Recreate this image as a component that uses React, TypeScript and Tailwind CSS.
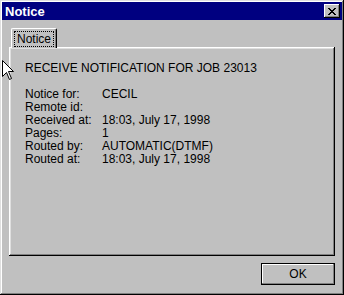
import React from 'react';

const rows: [string, string][] = [
  ['Notice for:', 'CECIL'],
  ['Remote id:', ''],
  ['Received at:', '18:03, July 17, 1998'],
  ['Pages:', '1'],
  ['Routed by:', 'AUTOMATIC(DTMF)'],
  ['Routed at:', '18:03, July 17, 1998'],
];

const Cursor = () => (
  <svg className="absolute left-[2px] top-[60px]" width="12" height="20" viewBox="0 0 12 20">
    <path d="M0.5 0.5 L0.5 16.5 L4.5 12.5 L7.5 19.5 L9.5 18.5 L6.5 11.5 L11.5 11.5 Z" fill="#fff" stroke="#000" strokeWidth="1" />
  </svg>
);

const App = () => {
  return (
    <div className="relative w-[344px] h-[295px] bg-[#c0c0c0] p-[2px] shadow-[inset_-1px_-1px_#000,inset_1px_1px_#dfdfdf,inset_-2px_-2px_#808080,inset_2px_2px_#fff]">
      {/* title bar */}
      <div className="h-[18px] bg-[#000080] flex items-center justify-between pl-[3px] pr-[2px]">
        <span className="text-white font-bold text-[13px] leading-none font-['Liberation_Sans',sans-serif]">Notice</span>
        <div className="w-[16px] h-[14px] bg-[#c0c0c0] flex items-center justify-center shadow-[inset_-1px_-1px_#000,inset_1px_1px_#fff,inset_-2px_-2px_#808080]">
          <svg width="8" height="7" viewBox="0 0 8 7">
            <path d="M0 0h2v1h1v1h2v-1h1v-1h2v1h-1v1h-1v1h-1v1h1v1h1v1h1v1h-2v-1h-1v-1h-2v1h-1v1h-2v-1h1v-1h1v-1h1v-1h-1v-1h-1v-1h-1z" fill="#000" />
          </svg>
        </div>
      </div>

      {/* tab control */}
      <div className="pl-[7px] pt-[8px] pr-[7px] text-[12px] font-['Liberation_Sans',sans-serif] text-black">
        <div className="flex">
          <div className="ml-[2px] w-[46px] h-[20px] bg-[#c0c0c0] rounded-t-[2px] border-t border-l border-white border-r border-r-[#000] shadow-[inset_-1px_0_#808080] relative z-10 -mb-[1px] flex items-center justify-center">
            <span className="border border-dotted border-black px-[2px] leading-[14px]">Notice</span>
          </div>
        </div>
        <div className="h-[209px] shadow-[inset_-1px_-1px_#000,inset_1px_1px_#fff,inset_-2px_-2px_#808080,inset_2px_2px_#dfdfdf] pl-[16px] pt-[14px]">
          <div className="leading-[14px] whitespace-nowrap">RECEIVE NOTIFICATION FOR JOB 23013</div>
          <div className="mt-[13px]">
            {rows.map(([label, value]) => (
              <div key={label} className="flex leading-[13px] h-[13px] whitespace-nowrap">
                <span className="w-[77px] shrink-0">{label}</span>
                <span>{value}</span>
              </div>
            ))}
          </div>
        </div>
        <div className="flex justify-end mt-[7px]">
          <button className="w-[74px] h-[22px] bg-[#c0c0c0] border border-black shadow-[inset_-1px_-1px_#808080,inset_1px_1px_#fff] flex items-center justify-center text-[12px]">
            OK
          </button>
        </div>
      </div>
      <Cursor />
    </div>
  );
};

export default App;
